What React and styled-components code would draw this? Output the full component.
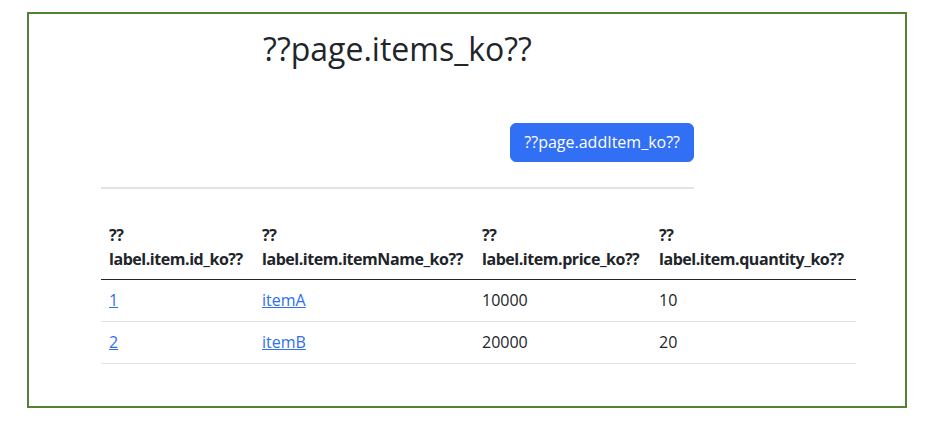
import React from "react";
import styled, { createGlobalStyle } from "styled-components";

const GlobalStyle = createGlobalStyle`
  html, body {
    margin: 0;
    padding: 0;
    background: #ffffff;
  }
  body {
    font-family: "Open Sans", "Noto Sans", sans-serif;
    font-size: 16px;
    line-height: 1.5;
    color: #212529;
  }
`;

const Frame = styled.div`
  box-sizing: border-box;
  margin: 12px 0 0 27px;
  width: 880px;
  height: 396px;
  border: 2px solid #548235;
  padding: 16px 0 0 72px;
`;

const Container = styled.div`
  width: 593px;
  display: flex;
  flex-direction: column;
`;

const Title = styled.h2`
  margin: 0;
  font-size: 32px;
  font-weight: 400;
  line-height: 1.2;
  text-align: center;
`;

const Actions = styled.div`
  display: flex;
  justify-content: flex-end;
  margin-top: 55px;
`;

const Button = styled.button`
  font-family: inherit;
  font-size: 16px;
  line-height: 25px;
  padding: 6px 13px;
  color: #ffffff;
  background: #316ff4;
  border: 1px solid #316ff4;
  border-radius: 6px;
  cursor: pointer;
`;

const Rule = styled.hr`
  margin: 25px 0 26px;
  border: 0;
  border-top: 2px solid #e1e2e3;
`;

const Table = styled.table`
  width: 755px;
  table-layout: fixed;
  border-collapse: collapse;
  text-align: left;
`;

const Th = styled.th`
  padding: 8px;
  font-weight: 700;
  white-space: nowrap;
  letter-spacing: -0.45px;
  vertical-align: bottom;
  border-bottom: 1px solid #212529;
`;

const Td = styled.td`
  padding: 8px;
  border-bottom: 1px solid #dee2e6;
  line-height: 25px;
`;

const Link = styled.a`
  color: #2f6ff0;
  text-decoration: underline;
`;

const columns = [
  { key: "id", label: "label.item.id_ko??", w: 153 },
  { key: "name", label: "label.item.itemName_ko??", w: 220 },
  { key: "price", label: "label.item.price_ko??", w: 177 },
  { key: "qty", label: "label.item.quantity_ko??", w: 205 },
];

const items = [
  { id: 1, itemName: "itemA", price: 10000, quantity: 10 },
  { id: 2, itemName: "itemB", price: 20000, quantity: 20 },
];

export default function App() {
  return (
    <>
      <GlobalStyle />
      <Frame>
        <Container>
          <Title>??page.items_ko??</Title>
          <Actions>
            <Button type="button">??page.addItem_ko??</Button>
          </Actions>
          <Rule />
          <Table>
            <colgroup>
              {columns.map((c) => (
                <col key={c.key} style={{ width: c.w }} />
              ))}
            </colgroup>
            <thead>
              <tr>
                {columns.map((c) => (
                  <Th key={c.key}>
                    ??
                    <br />
                    {c.label}
                  </Th>
                ))}
              </tr>
            </thead>
            <tbody>
              {items.map((item) => (
                <tr key={item.id}>
                  <Td>
                    <Link href="#">{item.id}</Link>
                  </Td>
                  <Td>
                    <Link href="#">{item.itemName}</Link>
                  </Td>
                  <Td>{item.price}</Td>
                  <Td>{item.quantity}</Td>
                </tr>
              ))}
            </tbody>
          </Table>
        </Container>
      </Frame>
    </>
  );
}
